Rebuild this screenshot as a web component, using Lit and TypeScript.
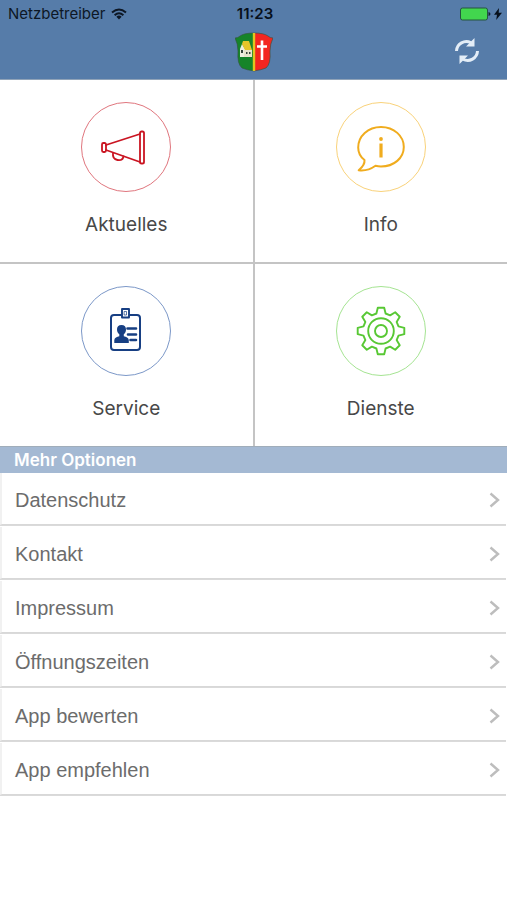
import { LitElement, html, css, svg } from "lit";
import { customElement } from "lit/decorators.js";

// Outline of a cog with eight teeth around (24, 24).
const gearPath = (() => {
  const profile: [number, number][] = [
    [-4.6, 17.5], [-3.2, 23.3], [3.2, 23.3], [4.6, 17.5],
  ];
  const points: string[] = [];
  for (let i = 0; i < 8; i++) {
    const a = (i * Math.PI) / 4;
    for (const [x, r] of profile) {
      const px = 24 + x * Math.cos(a) + r * Math.sin(a);
      const py = 24 + x * Math.sin(a) - r * Math.cos(a);
      points.push(`${px.toFixed(2)} ${py.toFixed(2)}`);
    }
  }
  return `M${points.join("L")}Z`;
})();

const icons = {
  news: svg`<g stroke-width="1.8">
    <rect x="0" y="20" width="4" height="9" rx="1.4"/>
    <path d="M4 22L38 11M4 27L38 39"/>
    <rect x="38" y="8.500" width="4" height="32" rx="1.6"/>
    <path d="M11 30c-.5 4 1.500 6.500 4.500 7s5.500-.8 6-3.700"/></g>`,
  info: svg`<path stroke-width="2" d="M7.500 37C3.500 34 1.200 30 1.200 24.500C1.200 13 11 4 24 4s22.800 9 22.800 20S37 43.500 24 43.500c-2 0-3.600-.2-5.500-.7C14 46 7 48 1.700 47.300C5 44.500 8 41 7.500 37Z"/>
    <path stroke-width="3.200" stroke-linecap="butt" d="M24 20.500v14"/><circle cx="24" cy="16" r="1.900" fill="currentColor" stroke="none"/>`,
  service: svg`<path stroke-width="2" d="M19 8h-7q-3 0-3 3v29q0 3 3 3h23q3 0 3-3v-29q0-3-3-3h-7"/>
    <rect x="20" y="2" width="7" height="8.500" stroke-width="1.900"/><rect x="22.500" y="4.500" width="2" height="3.500" stroke-width=".7"/>
    <g fill="currentColor" stroke="none"><path d="M19.500 18c-3 0-4.700 2-4.500 4.700.1 2.200 1.100 3.400 2.300 4.600v2c-2.300.7-4.800 1.500-5 3.700V36h14.500v-3c-.2-2.200-2.700-3-5-3.700v-2c1.200-1.200 2.100-2.400 2.200-4.600.2-2.700-1.500-4.700-4.500-4.700Z"/></g>
    <path stroke-width="2.600" d="M25.500 21.500h8.500M26 27.500h8M28.500 33h5.500"/>`,
  gear: svg`<path stroke-width="1.900" d=${gearPath}/>
    <circle cx="24" cy="24" r="12.800" stroke-width="1.900"/><circle cx="24" cy="24" r="6" stroke-width="1.900"/>`,
};

const tiles = [
  { label: "Aktuelles", tone: "red", icon: icons.news },
  { label: "Info", tone: "yellow", icon: icons.info },
  { label: "Service", tone: "blue", icon: icons.service },
  { label: "Dienste", tone: "green", icon: icons.gear },
];

const options = [
  "Datenschutz", "Kontakt", "Impressum",
  "Öffnungszeiten", "App bewerten", "App empfehlen",
];

@customElement("app-root")
export class AppRoot extends LitElement {
  static styles = css`
    :host {
      display: block;
      min-height: 100vh;
      background: #fff;
      font-family: Inter, "Liberation Sans", sans-serif;
    }
    header {
      background: #567ca9;
      border-bottom: 1px solid #90a3b8;
    }
    .status, .bar {
      display: grid;
      grid-template-columns: 1fr auto 1fr;
      align-items: center;
    }
    .status {
      height: 28px;
      padding: 0 5px 0 8px;
      font-size: 15px;
      line-height: 28px;
      color: #0d1725;
    }
    .carrier, .power { display: flex; align-items: center; gap: 6px; }
    .power { justify-content: flex-end; gap: 3px; }
    .clock { font-weight: 600; color: #07101c; }
    .bar { height: 51px; padding: 0 26px; }
    .crest { grid-column: 2; align-self: start; margin-top: 4px; }
    .refresh {
      justify-self: end;
      align-self: start;
      display: flex;
      margin-top: 10px;
      padding: 0;
      border: 0;
      background: none;
      color: #e3edf7;
      cursor: pointer;
    }
    svg { display: block; }
    .tiles {
      display: grid;
      grid-template-columns: 1fr 1fr;
      gap: 2px;
      background: #c4c4c4;
    }
    .tile {
      display: flex;
      flex-direction: column;
      align-items: center;
      gap: 21px;
      padding: 22px 0 25px;
      border: 0;
      background: #fff;
      color: #484848;
      font: 400 19px/24px Inter, "Liberation Sans", sans-serif;
      cursor: pointer;
    }
    .ring {
      box-sizing: border-box;
      width: 90px;
      height: 90px;
      display: grid;
      place-items: center;
      border: 1px solid var(--ring);
      border-radius: 50%;
      color: var(--ink);
    }
    .ring svg { overflow: visible; }
    .red { --ring: #e0767e; --ink: #ca1522; }
    .yellow { --ring: #f9d27a; --ink: #f0ac1e; }
    .blue { --ring: #7c98c8; --ink: #173f83; }
    .green { --ring: #a5e492; --ink: #58c834; }
    h2 {
      margin: 0;
      padding: 0 14px;
      border-top: 1px solid #a0adba;
      background: #a4b9d3;
      color: #fff;
      font-size: 17px;
      font-weight: 600;
      line-height: 26px;
    }
    ul {
      display: flex;
      flex-direction: column;
      gap: 2px;
      margin: 0;
      padding: 0 1px 0 0;
      list-style: none;
    }
    .row {
      box-sizing: border-box;
      height: 52px;
      display: flex;
      align-items: center;
      justify-content: space-between;
      padding: 3px 6px 0 13px;
      border-left: 2px solid #f1f1f1;
      border-bottom: 1px solid #d8d8d8;
      box-shadow: 0 1px 0 #dadada;
      color: #6c6c6c;
      font: 20px/24px "Liberation Sans", sans-serif;
      text-decoration: none;
    }
    .chevron { color: #bdbdbd; }
  `;

  render() {
    return html`
      <header>
        <div class="status">
          <span class="carrier">Netzbetreiber
            <svg width="16" height="12" viewBox="0 0 16 12" fill="none" stroke="currentColor" stroke-width="2" aria-hidden="true">
              <path d="M1 4.500Q8-1.500 15 4.500M3.600 7.200Q8 3.400 12.400 7.200"/>
              <path d="M5.400 8.700Q8 6.500 10.600 8.700L8 11.500Z" fill="currentColor" stroke="none"/>
            </svg>
          </span>
          <span class="clock">11:23</span>
          <span class="power">
            <svg width="31" height="14" viewBox="0 0 31 14" aria-hidden="true">
              <rect x=".5" y="1" width="27" height="12" rx="2" fill="#42d64e" stroke="#24543f"/>
              <path d="M28.500 5q2 .3 2 2t-2 2Z" fill="#142033"/>
            </svg>
            <svg width="8" height="12" viewBox="0 0 8 12" aria-hidden="true">
              <path d="M5 0L0 6.800h3L2.200 12L8 4.700H4.700Z" fill="#07101c"/>
            </svg>
          </span>
        </div>
        <div class="bar">
          <svg class="crest" width="38" height="40" viewBox="0 0 38 40" role="img" aria-label="Wappen">
            <path d="M19 1Q9 1 5 4Q3 6 0 6Q3 12 3 19Q2 32 7 36Q12 38 19 39Z" fill="#168429"/>
            <path d="M19 1Q29 1 33 4Q35 6 38 6Q35 12 35 19Q36 32 31 36Q26 38 19 39Z" fill="#f32620"/>
            <path d="M19 1Q9 1 5 4Q3 6 0 6Q3 12 3 19Q2 32 7 36Q12 38 19 39Q26 38 31 36Q36 32 35 19Q35 12 38 6Q35 6 33 4Q29 1 19 1Z" fill="none" stroke="#35533d" stroke-width=".6"/>
            <path d="M19 1v38" stroke="#e2c51f" stroke-width="2.400"/>
            <path d="M5 17l2-5 3 5v8H5Z" fill="#f0eee0"/>
            <path d="M8 9h6l3 9h-7l-3-6Z" fill="#e7c529"/>
            <path d="M9 18h8v7H9Z" fill="#e9e3cc"/>
            <path d="M6 18h2v3H6ZM11 20h1.500v2H11ZM14 20h1.500v2H14Z" fill="#39443d"/>
            <path d="M27 8.500v19.500M22 14.500h10" stroke="#fff" stroke-width="2.600"/>
          </svg>
          <button class="refresh" aria-label="Aktualisieren">
            <svg width="28" height="26" viewBox="0 0 28 26" fill="none" stroke="currentColor" stroke-width="3" aria-hidden="true">
              <path d="M3.500 13A9.800 9.800 0 0 1 18 4.800M24.500 13A9.800 9.800 0 0 1 10 21.200"/>
              <path d="M21.500 0v8.500H13ZM6.500 26v-8.500H15Z" fill="currentColor" stroke="none"/>
            </svg>
          </button>
        </div>
      </header>
      <main>
        <nav class="tiles">
          ${tiles.map((t) => html`
            <button class="tile">
              <span class="ring ${t.tone}">
                <svg width="48" height="48" viewBox="0 0 48 48" fill="none" stroke="currentColor"
                  stroke-linejoin="round" stroke-linecap="round" aria-hidden="true">${t.icon}</svg>
              </span>
              ${t.label}
            </button>`)}
        </nav>
        <h2>Mehr Optionen</h2>
        <ul>
          ${options.map((o) => html`
            <li><a class="row" href="#">${o}
              <svg class="chevron" width="11" height="16" viewBox="0 0 11 16" fill="none" stroke="currentColor" stroke-width="2.400" aria-hidden="true">
                <path d="M1.500 1.500L9 8L1.500 14.500"/>
              </svg></a></li>`)}
        </ul>
      </main>
    `;
  }
}
